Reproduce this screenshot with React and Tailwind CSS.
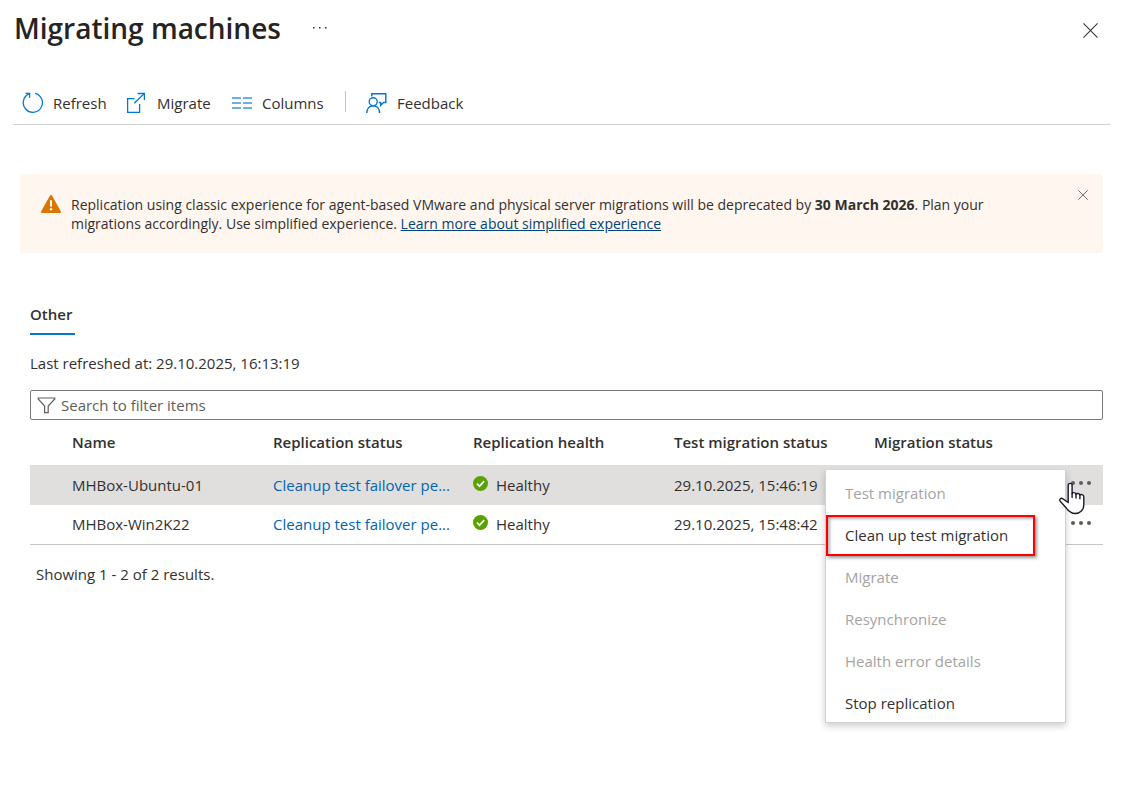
const CloseIcon = ({ className }) => (
  <svg viewBox="0 0 16 16" className={className} fill="none" stroke="currentColor" strokeWidth="1.1">
    <path d="M.5.5l15 15M15.5.5l-15 15" />
  </svg>
);

const RefreshIcon = () => (
  <svg width="22" height="22" viewBox="0 0 22 22" fill="none" stroke="#0078d4" strokeWidth="1.25">
    <path d="M13.2 1.4A9.6 9.6 0 1 1 7 1.9" />
    <path d="M3.4 1.4h4.2v4.3" />
  </svg>
);

const OpenIcon = () => (
  <svg width="20" height="22" viewBox="0 0 20 22" fill="none" stroke="#0078d4" strokeWidth="1.3">
    <path d="M8.5 6.6H1.6v13.8h12V12" />
    <path d="M8.3 11.2L18.2 1.6M11.6 1.5h6.8v6.6" />
  </svg>
);

const ColumnsIcon = () => (
  <svg width="20" height="14" viewBox="0 0 20 14" fill="none" stroke="#3a96dd" strokeWidth="1.6">
    <path d="M0 2h9M11 2h9M0 7h9M11 7h9M0 12h9M11 12h9" />
  </svg>
);

const FeedbackIcon = () => (
  <svg width="21" height="22" viewBox="0 0 21 22" fill="none" stroke="#0078d4" strokeWidth="1.4">
    <path d="M5.8 4.6V1.7h14v8.8h-2.2l-2.9 2.8v-2.8h-1.9" />
    <circle cx="7.2" cy="9.8" r="4" />
    <path d="M.8 21c0-4.600 2.700-7.200 6.400-7.200s6.400 2.600 6.400 7.200" />
  </svg>
);

const WarningIcon = () => (
  <svg width="20" height="18" viewBox="0 0 20 18">
    <path d="M8.900.7a1.250 1.250 0 0 1 2.200 0l8.700 15.600A1.150 1.150 0 0 1 18.800 18H1.200a1.150 1.150 0 0 1-1-1.700z" fill="#db7500" />
    <path d="M8.900 5.300h2.200l-.3 6.500H9.200z" fill="#fff" />
    <circle cx="10" cy="14.200" r="1.250" fill="#fff" />
  </svg>
);

const FilterIcon = () => (
  <svg width="19" height="17" viewBox="0 0 19 17" fill="none" stroke="#605e5c" strokeWidth="1.200">
    <path d="M1.200 1h16.600v1L11.200 9v6.600H7.600V9L1.200 2z" />
  </svg>
);

const HealthyIcon = () => (
  <svg width="15" height="15" viewBox="0 0 15 15">
    <circle cx="7.500" cy="7.500" r="7.500" fill="#57a300" />
    <path d="M3.900 7.700l2.600 2.500 4.700-5.100" fill="none" stroke="#fff" strokeWidth="1.700" />
  </svg>
);

const Dots = () => (
  <svg width="20" height="4" viewBox="0 0 20 4" fill="#605e5c">
    <circle cx="2" cy="2" r="2" />
    <circle cx="10" cy="2" r="2" />
    <circle cx="18" cy="2" r="2" />
  </svg>
);

const HandCursor = () => (
  <svg width="26" height="33" viewBox="0 0 26 33" fill="#fff" stroke="#1a1a2e" strokeWidth="1.400" strokeLinejoin="round" strokeLinecap="round">
    <path d="M9.200 20.500V3.200c0-2.500 3.900-2.500 3.900 0v8.500c.5-1.600 3.600-1.500 3.900.7.600-1.400 3.600-1.200 3.900.8.700-1.200 3.900-1 3.900 1.500v8c0 5-3.600 8.800-8.600 8.800-4.400 0-6.600-2.300-8.700-5.200L1.200 19.200c-1.300-2.300.9-3.600 2.700-2.400z" />
    <path d="M13.100 11.500v4M17 12.500v3.500M20.900 13.300v3.500" />
  </svg>
);

const rows = [
  { name: "MHBox-Ubuntu-01", date: "29.10.2025, 15:46:19", bg: "bg-[#e1dfdd]" },
  { name: "MHBox-Win2K22", date: "29.10.2025, 15:48:42", bg: "border-b border-[#c8c6c4]" },
];

const menu = [
  { label: "Test migration", cls: "text-[#a6a4a2]" },
  { label: "Clean up test migration", cls: "text-[#323130]", marked: true },
  { label: "Migrate", cls: "text-[#a6a4a2]" },
  { label: "Resynchronize", cls: "text-[#a6a4a2]" },
  { label: "Health error details", cls: "text-[#a6a4a2]" },
  { label: "Stop replication", cls: "text-[#323130]" },
];

export default function App() {
  return (
    <div className="relative h-[800px] w-[1121px] overflow-hidden bg-white font-['Open_Sans','Noto_Sans',sans-serif] text-[15px] whitespace-nowrap text-[#323130]">
      <header className="flex h-14 items-center pr-[23px] pl-3.5">
        <h1 className="text-[28px] font-semibold text-[#252423]">Migrating machines</h1>
        <svg width="14" height="2" viewBox="0 0 14 2" fill="#323130" className="ml-8">
          <path d="M0 0h1.500v1.500H0zM6 0h1.500v1.500H6zM12 0h1.500v1.500H12z" />
        </svg>
        <CloseIcon className="mt-1 ml-auto size-[15px]" />
      </header>

      <nav className="mr-[11px] ml-[13px] flex h-[69px] items-start border-b border-[#d2d0ce] pt-[35px] pl-[9px]">
        <div className="flex h-6 w-[104px] items-center gap-[9px]"><RefreshIcon /><span>Refresh</span></div>
        <div className="flex h-6 w-[106px] items-center gap-[11px]"><OpenIcon /><span>Migrate</span></div>
        <div className="flex h-6 w-[113px] items-center gap-2.5"><ColumnsIcon /><span>Columns</span></div>
        <div className="h-[21px] w-px bg-[#c8c6c4]" />
        <div className="ml-5 flex h-6 items-center gap-2.5"><FeedbackIcon /><span>Feedback</span></div>
      </nav>

      <section className="mt-[49px] mr-[18px] ml-5 flex h-[79px] items-start rounded-[3px] bg-[#fff6ef] pt-[21px] pr-[15px] pl-[21px] text-[14px] leading-[19px]">
        <WarningIcon />
        <p className="ml-2.5">
          Replication using classic experience for agent-based VMware and physical server migrations will be deprecated by <b>30 March 2026</b>. Plan your
          <br />
          migrations accordingly. Use simplified experience. <a className="text-[#004578] underline">Learn more about simplified experience</a>
        </p>
        <CloseIcon className="-mt-[5px] ml-auto size-2.5" />
      </section>

      <main className="mr-[18px] ml-[30px] pt-[49px]">
        <div className="flex h-[33px] w-[45px] border-b-2 border-[#0078d4] font-semibold leading-6">Other</div>
        <p className="mt-4 leading-6">Last refreshed at: 29.10.2025, 16:13:19</p>
        <div className="mt-[15px] flex h-[30px] items-center gap-[5px] rounded-[2px] border border-[#7a7876] pl-1.5 text-[#605e5c]">
          <FilterIcon />
          <span>Search to filter items</span>
        </div>
        <div className="grid h-[45px] grid-cols-[201px_200px_201px_200px_200px] items-center pl-[42px] font-semibold">
          <span>Name</span><span>Replication status</span><span>Replication health</span><span>Test migration status</span><span>Migration status</span>
        </div>
        {rows.map((r) => (
          <div key={r.name} className={`grid h-10 grid-cols-[201px_200px_201px_366px_30px] items-center pl-[42px] ${r.bg}`}>
            <span>{r.name}</span>
            <span className="text-[#0065b3]">Cleanup test failover pe...</span>
            <span className="flex items-center gap-2"><span className="-mt-1"><HealthyIcon /></span><span>Healthy</span></span>
            <span>{r.date}</span>
            <span className="pb-1 pl-[31px]"><Dots /></span>
          </div>
        ))}
        <p className="mt-[17px] pl-1.5 leading-6">Showing 1 - 2 of 2 results.</p>
      </main>

      <div className="absolute top-[470px] left-[825px] h-[253px] w-[241px] border border-t-0 border-[#d2d0ce] bg-white pt-0.5 shadow-[0_3px_7px_rgba(0,0,0,0.2)]">
        {menu.map((m) => (
          <div key={m.label} className="relative flex h-[42px] items-center pl-[19px]">
            {m.marked && <div className="absolute top-px left-0 h-[41px] w-[209px] border-2 border-[#f00] shadow-[2px_2px_3px_rgba(0,0,0,0.4),inset_2px_2px_3px_rgba(0,0,0,0.3)]" />}
            <span className={m.cls}>{m.label}</span>
          </div>
        ))}
      </div>
      <div className="absolute top-[482px] left-[1059px]"><HandCursor /></div>
    </div>
  );
}
